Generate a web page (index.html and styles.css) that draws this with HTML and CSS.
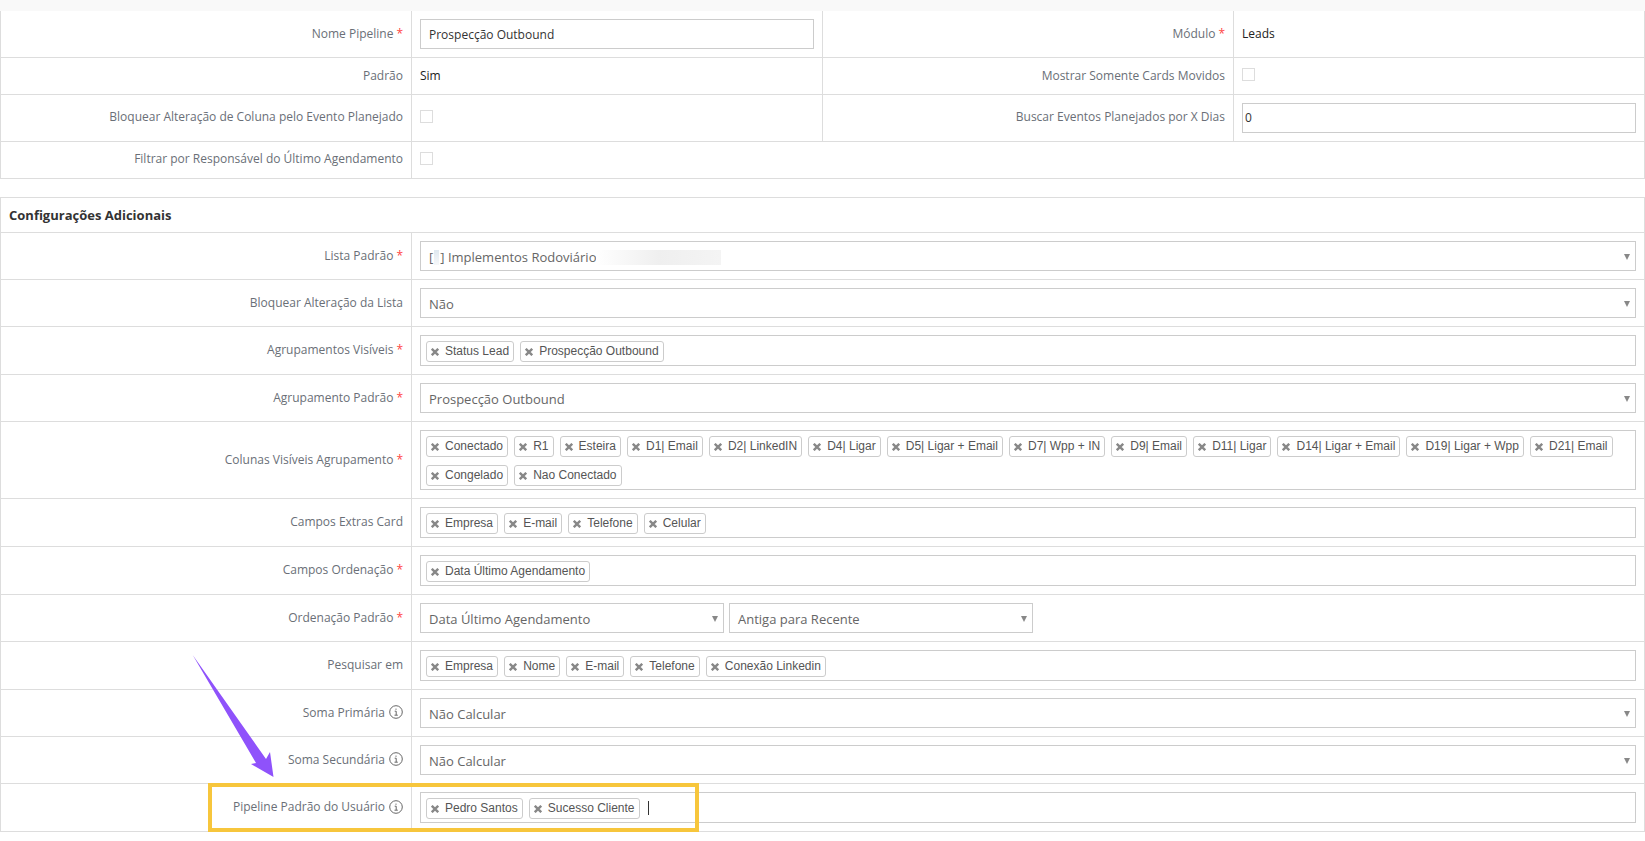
FILE: index.html
```html
<!DOCTYPE html>
<html lang="pt-BR">
<head>
<meta charset="utf-8">
<title>Configurações do Pipeline</title>
<link rel="stylesheet" href="styles.css">
</head>
<body>
<div class="top-band"></div>

<section class="panel panel-main">
  <div class="row">
    <div class="half">
      <label class="label">Nome Pipeline <span class="req">*</span></label>
      <div class="value"><input class="text-input" type="text" value="Prospecção Outbound"></div>
    </div>
    <div class="half half-right">
      <label class="label">Módulo <span class="req">*</span></label>
      <div class="value plain">Leads</div>
    </div>
  </div>
  <div class="row row-short">
    <div class="half">
      <label class="label">Padrão</label>
      <div class="value plain">Sim</div>
    </div>
    <div class="half half-right">
      <label class="label">Mostrar Somente Cards Movidos</label>
      <div class="value"><input class="check" type="checkbox"></div>
    </div>
  </div>
  <div class="row row-raised">
    <div class="half">
      <label class="label">Bloquear Alteração de Coluna pelo Evento Planejado</label>
      <div class="value"><input class="check" type="checkbox"></div>
    </div>
    <div class="half half-right">
      <label class="label">Buscar Eventos Planejados por X Dias</label>
      <div class="value"><input class="text-input text-input-tight" type="text" value="0"></div>
    </div>
  </div>
  <div class="row row-short row-raised">
    <label class="label">Filtrar por Responsável do Último Agendamento</label>
    <div class="value"><input class="check" type="checkbox"></div>
  </div>
</section>

<section class="panel panel-extra">
  <h2 class="panel-title">Configurações Adicionais</h2>

  <div class="row">
    <label class="label">Lista Padrão <span class="req">*</span></label>
    <div class="value"><div class="select">[<span class="blur-a"></span>] Implementos Rodoviário<span class="blur-b"></span></div></div>
  </div>
  <div class="row">
    <label class="label">Bloquear Alteração da Lista</label>
    <div class="value"><div class="select">Não</div></div>
  </div>
  <div class="row">
    <label class="label">Agrupamentos Visíveis <span class="req">*</span></label>
    <div class="value"><div class="tags">
      <span class="tag"><svg class="x" viewBox="0 0 7 7"><path d="M.7 .7l5.6 5.6M6.3 .7L.7 6.3"/></svg>Status Lead</span>
      <span class="tag"><svg class="x" viewBox="0 0 7 7"><path d="M.7 .7l5.6 5.6M6.3 .7L.7 6.3"/></svg>Prospecção Outbound</span>
    </div></div>
  </div>
  <div class="row">
    <label class="label">Agrupamento Padrão <span class="req">*</span></label>
    <div class="value"><div class="select">Prospecção Outbound</div></div>
  </div>
  <div class="row">
    <label class="label">Colunas Visíveis Agrupamento <span class="req">*</span></label>
    <div class="value"><div class="tags">
      <span class="tag"><svg class="x" viewBox="0 0 7 7"><path d="M.7 .7l5.6 5.6M6.3 .7L.7 6.3"/></svg>Conectado</span>
      <span class="tag"><svg class="x" viewBox="0 0 7 7"><path d="M.7 .7l5.6 5.6M6.3 .7L.7 6.3"/></svg>R1</span>
      <span class="tag"><svg class="x" viewBox="0 0 7 7"><path d="M.7 .7l5.6 5.6M6.3 .7L.7 6.3"/></svg>Esteira</span>
      <span class="tag"><svg class="x" viewBox="0 0 7 7"><path d="M.7 .7l5.6 5.6M6.3 .7L.7 6.3"/></svg>D1| Email</span>
      <span class="tag"><svg class="x" viewBox="0 0 7 7"><path d="M.7 .7l5.6 5.6M6.3 .7L.7 6.3"/></svg>D2| LinkedIN</span>
      <span class="tag"><svg class="x" viewBox="0 0 7 7"><path d="M.7 .7l5.6 5.6M6.3 .7L.7 6.3"/></svg>D4| Ligar</span>
      <span class="tag"><svg class="x" viewBox="0 0 7 7"><path d="M.7 .7l5.6 5.6M6.3 .7L.7 6.3"/></svg>D5| Ligar + Email</span>
      <span class="tag"><svg class="x" viewBox="0 0 7 7"><path d="M.7 .7l5.6 5.6M6.3 .7L.7 6.3"/></svg>D7| Wpp + IN</span>
      <span class="tag"><svg class="x" viewBox="0 0 7 7"><path d="M.7 .7l5.6 5.6M6.3 .7L.7 6.3"/></svg>D9| Email</span>
      <span class="tag"><svg class="x" viewBox="0 0 7 7"><path d="M.7 .7l5.6 5.6M6.3 .7L.7 6.3"/></svg>D11| Ligar</span>
      <span class="tag"><svg class="x" viewBox="0 0 7 7"><path d="M.7 .7l5.6 5.6M6.3 .7L.7 6.3"/></svg>D14| Ligar + Email</span>
      <span class="tag"><svg class="x" viewBox="0 0 7 7"><path d="M.7 .7l5.6 5.6M6.3 .7L.7 6.3"/></svg>D19| Ligar + Wpp</span>
      <span class="tag"><svg class="x" viewBox="0 0 7 7"><path d="M.7 .7l5.6 5.6M6.3 .7L.7 6.3"/></svg>D21| Email</span>
      <span class="tag"><svg class="x" viewBox="0 0 7 7"><path d="M.7 .7l5.6 5.6M6.3 .7L.7 6.3"/></svg>Congelado</span>
      <span class="tag"><svg class="x" viewBox="0 0 7 7"><path d="M.7 .7l5.6 5.6M6.3 .7L.7 6.3"/></svg>Nao Conectado</span>
    </div></div>
  </div>
  <div class="row">
    <label class="label">Campos Extras Card</label>
    <div class="value"><div class="tags">
      <span class="tag"><svg class="x" viewBox="0 0 7 7"><path d="M.7 .7l5.6 5.6M6.3 .7L.7 6.3"/></svg>Empresa</span>
      <span class="tag"><svg class="x" viewBox="0 0 7 7"><path d="M.7 .7l5.6 5.6M6.3 .7L.7 6.3"/></svg>E-mail</span>
      <span class="tag"><svg class="x" viewBox="0 0 7 7"><path d="M.7 .7l5.6 5.6M6.3 .7L.7 6.3"/></svg>Telefone</span>
      <span class="tag"><svg class="x" viewBox="0 0 7 7"><path d="M.7 .7l5.6 5.6M6.3 .7L.7 6.3"/></svg>Celular</span>
    </div></div>
  </div>
  <div class="row">
    <label class="label">Campos Ordenação <span class="req">*</span></label>
    <div class="value"><div class="tags">
      <span class="tag"><svg class="x" viewBox="0 0 7 7"><path d="M.7 .7l5.6 5.6M6.3 .7L.7 6.3"/></svg>Data Último Agendamento</span>
    </div></div>
  </div>
  <div class="row">
    <label class="label">Ordenação Padrão <span class="req">*</span></label>
    <div class="value value-pair">
      <div class="select select-half">Data Último Agendamento</div>
      <div class="select select-half">Antiga para Recente</div>
    </div>
  </div>
  <div class="row">
    <label class="label">Pesquisar em</label>
    <div class="value"><div class="tags">
      <span class="tag"><svg class="x" viewBox="0 0 7 7"><path d="M.7 .7l5.6 5.6M6.3 .7L.7 6.3"/></svg>Empresa</span>
      <span class="tag"><svg class="x" viewBox="0 0 7 7"><path d="M.7 .7l5.6 5.6M6.3 .7L.7 6.3"/></svg>Nome</span>
      <span class="tag"><svg class="x" viewBox="0 0 7 7"><path d="M.7 .7l5.6 5.6M6.3 .7L.7 6.3"/></svg>E-mail</span>
      <span class="tag"><svg class="x" viewBox="0 0 7 7"><path d="M.7 .7l5.6 5.6M6.3 .7L.7 6.3"/></svg>Telefone</span>
      <span class="tag"><svg class="x" viewBox="0 0 7 7"><path d="M.7 .7l5.6 5.6M6.3 .7L.7 6.3"/></svg>Conexão Linkedin</span>
    </div></div>
  </div>
  <div class="row">
    <label class="label">Soma Primária <svg class="info" viewBox="0 0 14 14"><circle cx="7" cy="7" r="6.3"/><path d="M5.7 6.2H7.2V10M5.5 10.2H8.8M7 3.6v1.2"/></svg></label>
    <div class="value"><div class="select">Não Calcular</div></div>
  </div>
  <div class="row">
    <label class="label">Soma Secundária <svg class="info" viewBox="0 0 14 14"><circle cx="7" cy="7" r="6.3"/><path d="M5.7 6.2H7.2V10M5.5 10.2H8.8M7 3.6v1.2"/></svg></label>
    <div class="value"><div class="select">Não Calcular</div></div>
  </div>
  <div class="row">
    <label class="label">Pipeline Padrão do Usuário <svg class="info" viewBox="0 0 14 14"><circle cx="7" cy="7" r="6.3"/><path d="M5.7 6.2H7.2V10M5.5 10.2H8.8M7 3.6v1.2"/></svg></label>
    <div class="value"><div class="tags">
      <span class="tag"><svg class="x" viewBox="0 0 7 7"><path d="M.7 .7l5.6 5.6M6.3 .7L.7 6.3"/></svg>Pedro Santos</span>
      <span class="tag"><svg class="x" viewBox="0 0 7 7"><path d="M.7 .7l5.6 5.6M6.3 .7L.7 6.3"/></svg>Sucesso Cliente</span>
      <span class="caret"></span>
    </div></div>
  </div>
</section>

<div class="highlight-box"></div>
<svg class="pointer-arrow" viewBox="0 0 1645 841"><polygon points="192.7,655 266,759 270,752 273.5,777 251,764 256,763"/></svg>
</body>
</html>
```

FILE: styles.css
```css
* { box-sizing: border-box; }

html, body {
  margin: 0;
  background: #fff;
}

body {
  position: relative;
  height: 841px;
  overflow: hidden;
  font-family: "Open Sans", sans-serif;
  font-size: 12px;
  color: #333;
}

.top-band {
  height: 11px;
  background: #f9f9f9;
}

.panel {
  border-left: 1px solid #ddd;
  border-right: 1px solid #ddd;
}

.panel-extra {
  margin-top: 18px;
  border-top: 1px solid #ddd;
}

.panel-title {
  margin: 0;
  height: 35px;
  padding-left: 8px;
  border-bottom: 1px solid #ddd;
  display: flex;
  align-items: center;
  font-size: 13px;
  font-weight: 700;
  color: #333;
}

.row {
  display: flex;
  border-bottom: 1px solid #ddd;
}

.row-short {
  min-height: 37px;
}

.half {
  display: flex;
  width: 822px;
  flex: none;
  border-right: 1px solid #ddd;
}

.half-right {
  width: auto;
  flex: 1;
  border-right: 0;
}

.half .value {
  flex: 1;
}

.label {
  flex: none;
  width: 411px;
  padding: 0 8px 2px 0;
  border-right: 1px solid #ddd;
  display: flex;
  align-items: center;
  justify-content: flex-end;
  gap: 4px;
  color: #6a6f77;
  white-space: nowrap;
}

.row-raised .label {
  padding-bottom: 4px;
}

.req {
  margin-left: -1px;
  color: #f44;
  font-size: 12px;
}

.value {
  flex: 1;
  min-width: 0;
  padding: 8px;
  display: flex;
  align-items: center;
}

.plain {
  padding-bottom: 10px;
  color: #222;
  font-size: 12px;
}

.text-input {
  width: 100%;
  height: 30px;
  padding: 0 8px;
  border: 1px solid #ccc;
  font: 12px "Open Sans", sans-serif;
  color: #333;
  background: #fff;
}

.text-input-tight {
  padding: 0 2px 2px;
}

.check {
  appearance: none;
  width: 13px;
  height: 13px;
  margin: -3px 0 0;
  border: 1px solid #ddd;
  background: #fff;
}

.select {
  position: relative;
  flex: 1;
  height: 30px;
  padding-left: 8px;
  border: 1px solid #ccc;
  font-size: 13px;
  line-height: 31px;
  color: #666;
  background: #fff;
  white-space: nowrap;
}

.select::after {
  content: "";
  position: absolute;
  right: 5px;
  top: 12px;
  border-left: 3px solid transparent;
  border-right: 3px solid transparent;
  border-top: 6px solid #888;
}

.value-pair {
  gap: 5px;
}

.select-half {
  flex: none;
  width: 304px;
}

.blur-a {
  display: inline-block;
  width: 5px;
  height: 15px;
  margin: 0 1px;
  vertical-align: -3px;
  background: linear-gradient(#dfe8f0, #f6f8fa);
}

.blur-b {
  display: inline-block;
  width: 125px;
  height: 15px;
  vertical-align: -3px;
  background: linear-gradient(90deg, #fff, #efefef 50%, #f4f4f4);
}

.tags {
  flex: 1;
  display: flex;
  flex-wrap: wrap;
  align-items: flex-start;
  gap: 8px 6px;
  padding: 5px 5px 3px;
  min-height: 31px;
  border: 1px solid #ccc;
  background: #fff;
}

.tag {
  display: inline-flex;
  align-items: center;
  height: 21px;
  padding: 0 4.1px 1px 4px;
  border: 1px solid #ccc;
  border-radius: 3px;
  font-family: "Liberation Sans", Arial, sans-serif;
  font-size: 12px;
  color: #555;
  background: #fff;
  white-space: nowrap;
}

.x {
  width: 8px;
  height: 8px;
  margin: 2px 6px 0 0;
  fill: none;
  stroke: #888;
  stroke-width: 2.1;
}

.caret {
  width: 1px;
  height: 14px;
  margin: 3px 0 0 2px;
  background: #333;
}

.info {
  flex: none;
  width: 14px;
  height: 14px;
  fill: none;
  stroke: #666;
  stroke-width: 1;
}

.highlight-box {
  position: absolute;
  left: 208px;
  top: 783px;
  width: 491px;
  height: 49px;
  border: 4px solid #f7c63c;
}

.pointer-arrow {
  position: absolute;
  left: 0;
  top: 0;
  width: 1645px;
  height: 841px;
  fill: #8f52fb;
  pointer-events: none;
}
```
